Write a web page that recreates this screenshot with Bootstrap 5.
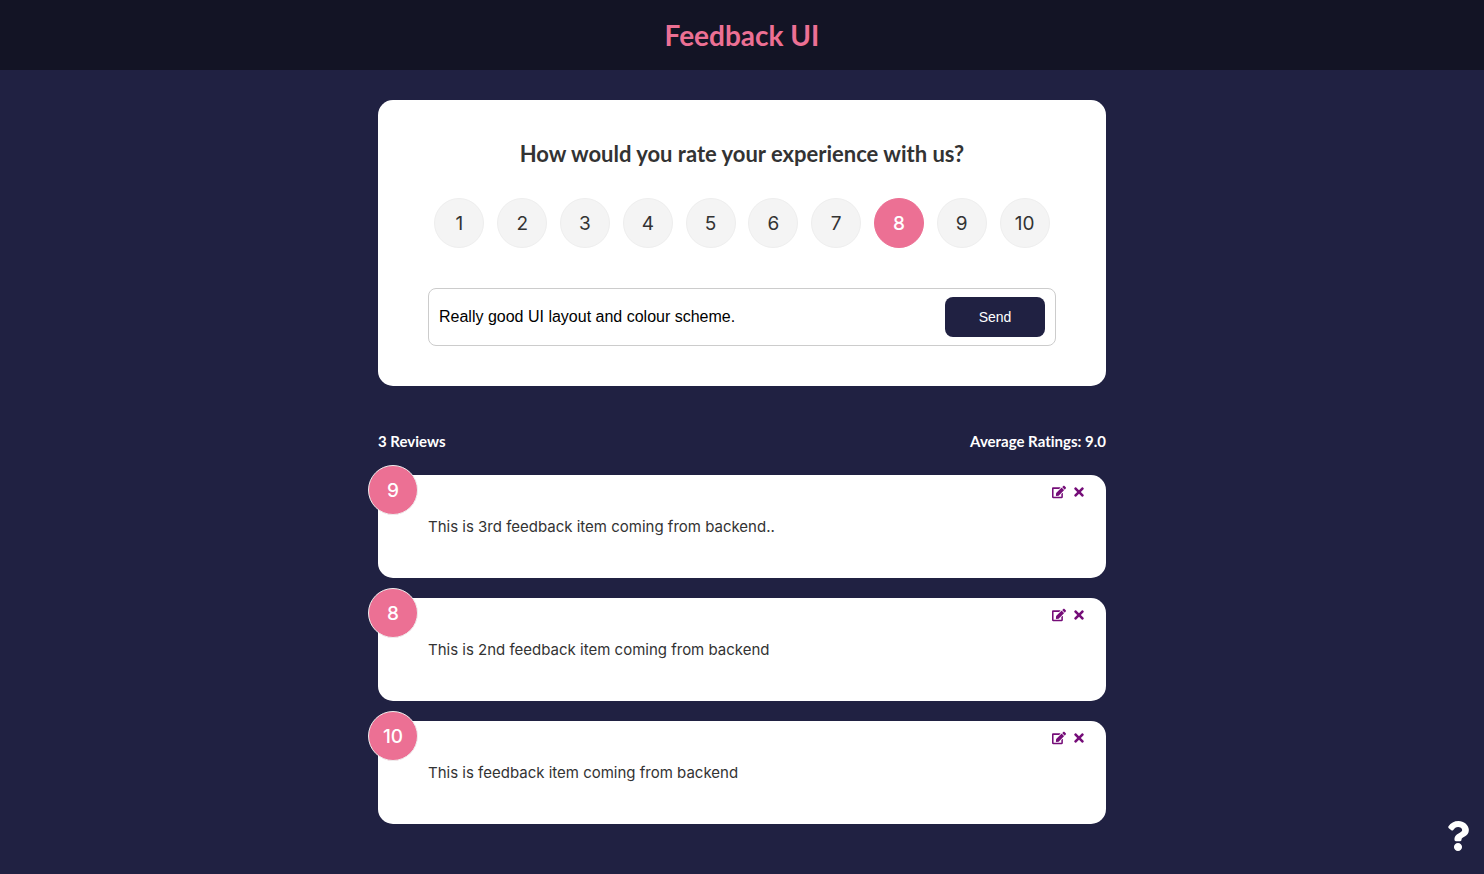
<!DOCTYPE html>
<html lang="en">
<head>
<meta charset="utf-8">
<meta name="viewport" content="width=device-width, initial-scale=1">
<title>Feedback UI</title>
<link href="https://cdn.jsdelivr.net/npm/bootstrap@5.3.0/dist/css/bootstrap.min.css" rel="stylesheet">
<style>
  :root { --navy: #202142; --pink: #ec7094; }
  body { background: var(--navy); color: #333; font-family: Inter, sans-serif; font-size: 15px; line-height: 23px; }
  h1, h2, .stats { font-family: Lato, sans-serif; font-weight: 700; font-variant-ligatures: none; }
  .site-header { background: #131425; padding: 16px 20px; }
  .site-header h1 { color: var(--pink); font-size: 28px; line-height: 38px; }
  .page { max-width: 768px; padding: 30px 20px; }
  .panel { border: 0; border-radius: 15px; padding: 40px 50px; color: inherit; }
  .question { font-size: 22px; line-height: 28px; margin-bottom: 30px; }
  .circle { width: 50px; height: 50px; border: 1px solid #eee; border-radius: 50%; font-size: 19px; display: flex; align-items: center; justify-content: center; background: #f4f4f4; }
  .rating label { cursor: pointer; }
  .rating input:checked + label, .score { background: var(--pink); color: #fff; font-weight: 500; }
  .rating input:checked + label { border-color: var(--pink); }
  .rating input:focus-visible + label { outline: 2px solid var(--navy); }
  .entry { border: 1px solid #ccc; border-radius: 8px; padding: 8px 10px; margin-top: 40px; font-family: "Liberation Sans", Arial, sans-serif; }
  .entry input { font-size: 16px; color: #000; line-height: 24px; }
  .entry .form-control:focus { box-shadow: none; }
  .send { width: 100px; height: 40px; border: 0; border-radius: 8px; background: var(--navy); color: #fff; font-size: 14px; }
  .stats { color: #fff; font-size: 15px; line-height: 24px; margin: 43px 0 22px; }
  .reviews { gap: 20px; }
  .score { position: absolute; top: -10px; left: -10px; }
  .tools { position: absolute; top: 10px; right: 20px; gap: 6px; }
  .tools button { border: 0; background: none; padding: 0; color: #750d78; line-height: 14px; }
  .tools svg { width: 14px; height: 14px; display: block; }
  .about { position: fixed; right: 11px; bottom: 23px; color: #fff; }
  .about svg { width: 30px; height: 30px; display: block; }
</style>
</head>
<body>
<svg class="d-none" aria-hidden="true">
  <symbol id="edit" viewBox="0 0 576 512"><path fill="currentColor" d="M402.6 83.2l90.2 90.2c3.8 3.8 3.8 10 0 13.8L274.4 405.6l-92.8 10.3c-12.4 1.4-22.9-9.1-21.5-21.5l10.3-92.8L388.8 83.2c3.8-3.8 10-3.8 13.8 0zm162-22.9l-48.8-48.8c-15.2-15.2-39.9-15.2-55.2 0l-35.4 35.4c-3.8 3.8-3.8 10 0 13.8l90.2 90.2c3.8 3.8 10 3.8 13.8 0l35.4-35.4c15.2-15.3 15.2-40 0-55.2zM384 346.2V448H64V128h229.8c3.2 0 6.2-1.3 8.5-3.5l40-40c7.6-7.6 2.2-20.5-8.5-20.5H48C21.5 64 0 85.5 0 112v352c0 26.5 21.5 48 48 48h352c26.5 0 48-21.5 48-48V306.2c0-10.7-12.9-16-20.5-8.5l-40 40c-2.2 2.3-3.5 5.3-3.5 8.5z"/></symbol>
  <symbol id="times" viewBox="0 0 352 512"><path fill="currentColor" d="M242.72 256l100.07-100.07c12.28-12.28 12.28-32.19 0-44.48l-22.24-22.24c-12.28-12.28-32.19-12.28-44.48 0L176 189.28 75.93 89.21c-12.28-12.28-32.19-12.28-44.48 0L9.21 111.45c-12.28 12.28-12.28 32.19 0 44.48L109.28 256 9.21 356.07c-12.28 12.28-12.28 32.19 0 44.48l22.24 22.24c12.28 12.28 32.2 12.28 44.48 0L176 322.72l100.07 100.07c12.28 12.28 32.2 12.28 44.48 0l22.24-22.24c12.28-12.28 12.28-32.19 0-44.48L242.72 256z"/></symbol>
</svg>

<header class="site-header text-center">
  <h1 class="m-0">Feedback UI</h1>
</header>

<main class="page container-fluid mx-auto">
  <form class="panel card">
    <h2 class="question text-center" id="question">How would you rate your experience with us?</h2>
    <div class="rating d-flex flex-wrap justify-content-around" role="radiogroup" aria-labelledby="question">
      <div><input class="visually-hidden" type="radio" name="rating" id="r1" value="1"><label class="circle" for="r1">1</label></div>
      <div><input class="visually-hidden" type="radio" name="rating" id="r2" value="2"><label class="circle" for="r2">2</label></div>
      <div><input class="visually-hidden" type="radio" name="rating" id="r3" value="3"><label class="circle" for="r3">3</label></div>
      <div><input class="visually-hidden" type="radio" name="rating" id="r4" value="4"><label class="circle" for="r4">4</label></div>
      <div><input class="visually-hidden" type="radio" name="rating" id="r5" value="5"><label class="circle" for="r5">5</label></div>
      <div><input class="visually-hidden" type="radio" name="rating" id="r6" value="6"><label class="circle" for="r6">6</label></div>
      <div><input class="visually-hidden" type="radio" name="rating" id="r7" value="7"><label class="circle" for="r7">7</label></div>
      <div><input class="visually-hidden" type="radio" name="rating" id="r8" value="8" checked><label class="circle" for="r8">8</label></div>
      <div><input class="visually-hidden" type="radio" name="rating" id="r9" value="9"><label class="circle" for="r9">9</label></div>
      <div><input class="visually-hidden" type="radio" name="rating" id="r10" value="10"><label class="circle" for="r10">10</label></div>
    </div>
    <div class="entry d-flex align-items-center">
      <input class="form-control border-0 p-0 bg-transparent" type="text" aria-label="Write a review" value="Really good UI layout and colour scheme.">
      <button class="send flex-shrink-0" type="submit">Send</button>
    </div>
  </form>

  <div class="stats d-flex justify-content-between">
    <span>3 Reviews</span>
    <span>Average Ratings: 9.0</span>
  </div>

  <section class="reviews d-flex flex-column" aria-label="Reviews">
    <article class="panel card">
      <div class="score circle">9</div>
      <div class="tools d-flex">
        <button type="button" aria-label="Edit"><svg><use href="#edit"/></svg></button>
        <button type="button" aria-label="Delete"><svg><use href="#times"/></svg></button>
      </div>
      <p class="m-0">This is 3rd feedback item coming from backend..</p>
    </article>
    <article class="panel card">
      <div class="score circle">8</div>
      <div class="tools d-flex">
        <button type="button" aria-label="Edit"><svg><use href="#edit"/></svg></button>
        <button type="button" aria-label="Delete"><svg><use href="#times"/></svg></button>
      </div>
      <p class="m-0">This is 2nd feedback item coming from backend</p>
    </article>
    <article class="panel card">
      <div class="score circle">10</div>
      <div class="tools d-flex">
        <button type="button" aria-label="Edit"><svg><use href="#edit"/></svg></button>
        <button type="button" aria-label="Delete"><svg><use href="#times"/></svg></button>
      </div>
      <p class="m-0">This is feedback item coming from backend</p>
    </article>
  </section>
</main>

<a class="about" href="#about" aria-label="About">
  <svg viewBox="0 0 384 512"><path fill="currentColor" d="M202.021 0C122.202 0 70.503 32.703 29.914 91.026c-7.363 10.58-5.093 25.086 5.178 32.874l43.138 32.709c10.373 7.865 25.132 6.026 33.253-4.148 25.049-31.381 43.63-49.449 82.757-49.449 30.764 0 68.816 19.799 68.816 49.631 0 22.552-18.617 34.134-48.993 51.164-35.423 19.86-82.299 44.576-82.299 106.405V320c0 13.255 10.745 24 24 24h72.471c13.255 0 24-10.745 24-24v-5.773c0-42.86 125.268-44.645 125.268-160.627C377.504 66.256 286.902 0 202.021 0zM192 373.459c-38.196 0-69.271 31.075-69.271 69.271 0 38.195 31.075 69.27 69.271 69.27s69.271-31.075 69.271-69.271-31.075-69.27-69.271-69.27z"/></svg>
</a>
<script src="https://cdn.jsdelivr.net/npm/bootstrap@5.3.0/dist/js/bootstrap.bundle.min.js"></script>
</body>
</html>
